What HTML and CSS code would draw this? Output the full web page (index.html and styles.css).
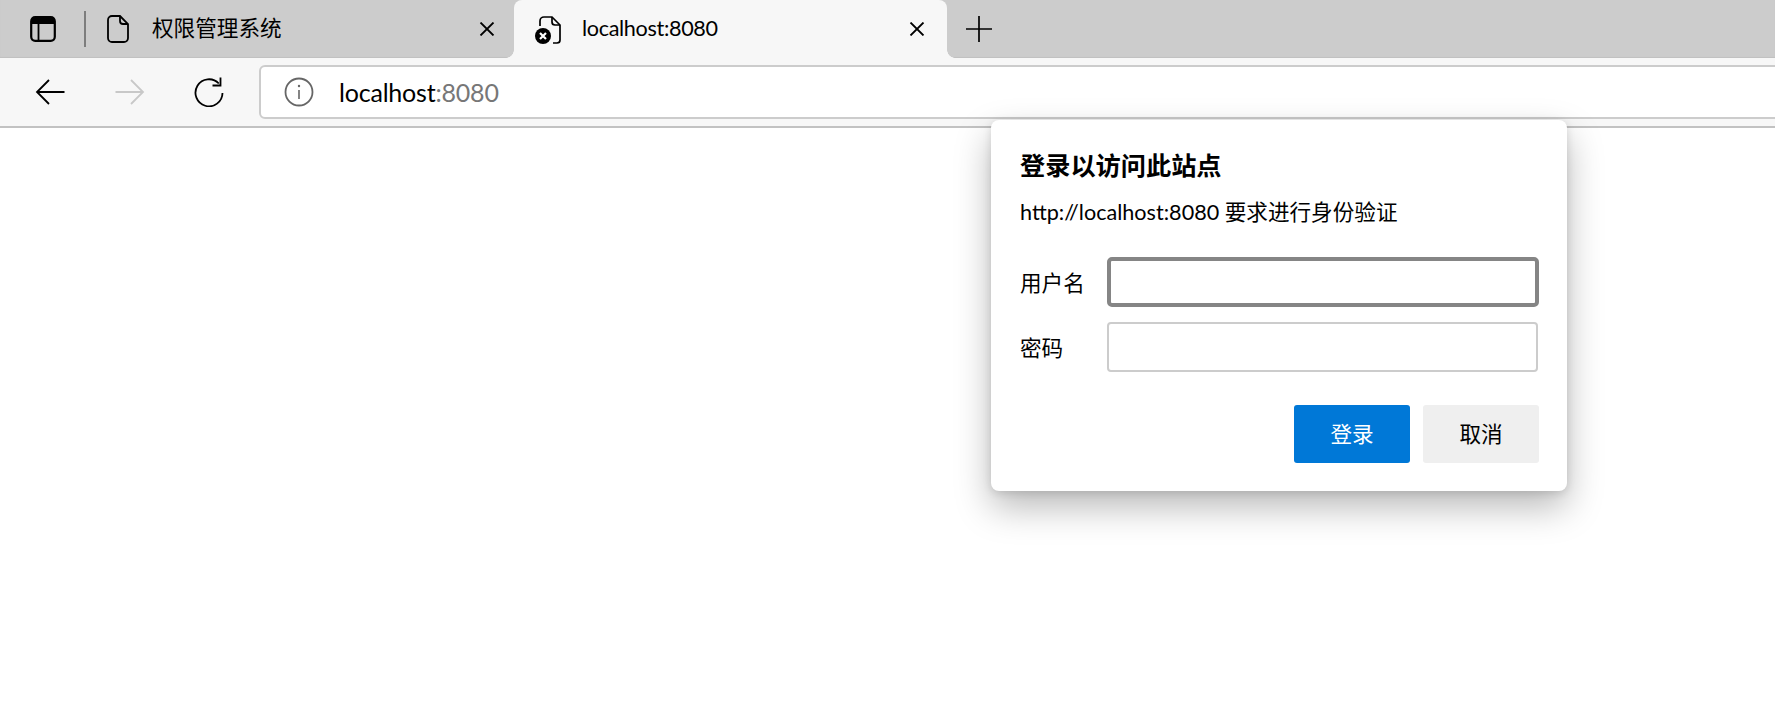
FILE: index.html
```html
<!DOCTYPE html>
<html lang="zh-CN">
<head>
<meta charset="utf-8">
<title>localhost:8080</title>
<link rel="stylesheet" href="styles.css">
</head>
<body>
<div class="strip">
  <div class="strip-lead">
    <svg class="ico-side" viewBox="0 0 26 26"><rect x="1.2" y="1.2" width="23.6" height="23.6" rx="4" fill="none" stroke="#000" stroke-width="2.2"/><path d="M1.2 8V5a4 4 0 0 1 4-4h15.600a4 4 0 0 1 4 4v3z" fill="#000"/><path d="M8.500 8v16" stroke="#000" stroke-width="1.800"/></svg>
    <span class="sep"></span>
  </div>
  <div class="tab tab-idle">
    <svg class="ico-doc" viewBox="0 0 22 28"><path d="M5 1h8l8 8v14a4 4 0 0 1-4 4H5a4 4 0 0 1-4-4V5a4 4 0 0 1 4-4z" fill="none" stroke="#000" stroke-width="1.800"/><path d="M13 1v5a3 3 0 0 0 3 3h5" fill="none" stroke="#000" stroke-width="1.800"/></svg>
    <span class="tab-title">权限管理系统</span>
    <svg class="ico-x" viewBox="0 0 16 14"><path d="M1.500 0.500l13 13M14.500 0.500l-13 13" stroke="#000" stroke-width="1.800" fill="none"/></svg>
  </div>
  <div class="tab tab-active">
    <svg class="ico-err" viewBox="0 0 26 29"><path d="M5 11V6a4 4 0 0 1 4-4h8l8 8v15a3 3 0 0 1-3 3h-4" fill="none" stroke="#000" stroke-width="1.700"/><path d="M17 2v5a3 3 0 0 0 3 3h5" fill="none" stroke="#000" stroke-width="1.700"/><circle cx="8" cy="21" r="8" fill="#000"/><path d="M5 18l6 6M11 18l-6 6" stroke="#fff" stroke-width="2.200"/></svg>
    <span class="tab-title">localhost:8080</span>
    <svg class="ico-x" viewBox="0 0 16 14"><path d="M1.500 0.500l13 13M14.500 0.500l-13 13" stroke="#000" stroke-width="1.800" fill="none"/></svg>
  </div>
  <svg class="ico-plus" viewBox="0 0 26 26"><path d="M13 0v26M0 13h26" stroke="#000" stroke-width="1.700" fill="none"/></svg>
</div>
<div class="toolbar">
  <svg class="nav nav-back" viewBox="0 0 30 26"><path d="M29.500 13H2M14 1L2 13l12 12" fill="none" stroke="#000" stroke-width="1.800"/></svg>
  <svg class="nav nav-fwd" viewBox="0 0 30 26"><path d="M0.500 13H28M16 1l12 12-12 12" fill="none" stroke="#c8c8c8" stroke-width="1.800"/></svg>
  <svg class="nav nav-reload" viewBox="0 0 30 30"><path d="M24.800 6.500A13.500 13.500 0 1 0 28.500 16" fill="none" stroke="#000" stroke-width="1.800"/><path d="M26.500 0.500v8h-8" fill="none" stroke="#000" stroke-width="1.800"/></svg>
  <div class="address">
    <svg class="ico-info" viewBox="0 0 30 30"><circle cx="15" cy="15" r="13.500" fill="none" stroke="#666" stroke-width="1.800"/><path d="M15 13v9" stroke="#666" stroke-width="1.600"/><circle cx="15" cy="9" r="1.200" fill="#666"/></svg>
    <span class="url">localhost<span class="url-port">:8080</span></span>
  </div>
</div>
<main class="page"></main>
<form class="dialog">
  <h1 class="dlg-title">登录以访问此站点</h1>
  <p class="dlg-sub">http://localhost:8080 要求进行身份验证</p>
  <div class="field field-first">
    <label class="field-label" for="u">用户名</label>
    <input class="field-input field-focus" id="u" type="text">
  </div>
  <div class="field field-second">
    <label class="field-label" for="p">密码</label>
    <input class="field-input" id="p" type="password">
  </div>
  <div class="actions">
    <button class="btn btn-primary" type="button">登录</button>
    <button class="btn" type="button">取消</button>
  </div>
</form>
</body>
</html>
```
FILE: styles.css
```css
* { box-sizing: border-box; }
html, body { margin: 0; height: 100%; }
body {
  background: #fff;
  color: #000;
  font-family: "Lato", "Noto Sans CJK SC", sans-serif;
  overflow: hidden;
}
.strip {
  height: 58px;
  background: #ccc;
  display: flex;
  align-items: stretch;
  box-shadow: inset 0 -1px 1px rgba(0,0,0,.06);
}
.strip-lead {
  display: flex;
  align-items: center;
  padding: 0 0 0 30px;
  width: 86px;
  flex: none;
}
.ico-side { width: 26px; height: 26px; margin-right: 28px; flex: none; }
.sep { width: 2px; height: 36px; background: #7d7d7d; flex: none; }
.tab { display: flex; align-items: center; flex: none; }
.tab-title { font-size: 21.6px; line-height: 30px; white-space: nowrap; margin-bottom: 3px; }
.tab-idle {
  width: 428px;
  padding-left: 21px;
}
.tab-idle .tab-title { margin-left: 23px; width: 327px; }
.ico-doc { width: 22px; height: 28px; flex: none; }
.ico-x { width: 16px; height: 14px; flex: none; }
.tab-active {
  position: relative;
  width: 433px;
  background: #f7f7f7;
  border-radius: 8px 8px 0 0;
  padding-left: 21px;
}
.tab-active::before,
.tab-active::after {
  content: "";
  position: absolute;
  bottom: 0;
  width: 8px;
  height: 8px;
}
.tab-active::before {
  left: -8px;
  background: radial-gradient(circle at 0 0, transparent 7.5px, #f7f7f7 8px);
}
.tab-active::after {
  right: -8px;
  background: radial-gradient(circle at 100% 0, transparent 7.5px, #f7f7f7 8px);
}
.tab-active .tab-title { margin-left: 21px; width: 327px; letter-spacing: -0.33px; }
.ico-err { width: 26px; height: 29px; flex: none; }
.ico-plus { width: 26px; height: 26px; margin-left: 19px; align-self: center; flex: none; margin-bottom: 1px; }
.toolbar {
  height: 70px;
  background: #f7f7f7;
  border-bottom: 2px solid #c2c2c2;
  display: flex;
  align-items: center;
  padding: 0 0 0 35px;
  overflow: hidden;
}
.nav { flex: none; }
.nav-back { width: 30px; height: 26px; margin-right: 50px; }
.nav-fwd { width: 30px; height: 26px; margin-right: 49px; }
.nav-reload { width: 30px; height: 30px; margin-right: 35px; }
.address {
  flex: 1;
  height: 54px;
  margin-right: -12px;
  background: #fff;
  border: 2px solid #ccc;
  border-radius: 6px;
  display: flex;
  align-items: center;
  padding-left: 23px;
}
.ico-info { width: 30px; height: 30px; flex: none; margin-right: 25px; }
.url { font-size: 25px; line-height: 34px; color: #000; letter-spacing: -0.2px; }
.url-port { color: #777; }
.page { height: 591px; background: #fff; }
.dialog {
  position: absolute;
  left: 991px;
  top: 120px;
  width: 576px;
  height: 371px;
  background: #fff;
  border-radius: 8px;
  box-shadow: 0 16px 36px rgba(0,0,0,.28), 0 2px 8px rgba(0,0,0,.12);
  padding: 28px 29px 28px 29px;
  margin: 0;
}
.dlg-title { margin: 0; font-size: 25.2px; line-height: 34px; font-weight: 700; }
.dlg-sub { margin: 15px 0 0; font-size: 21.6px; line-height: 30px; }
.field { display: flex; align-items: center; }
.field-first { margin-top: 30px; }
.field-second { margin-top: 15px; }
.field-label { width: 87px; flex: none; font-size: 21.6px; line-height: 30px; margin-top: 2px; }
.field-input {
  width: 431px;
  height: 50px;
  flex: none;
  border: 2px solid #ccc;
  border-radius: 4px;
  background: #fff;
  outline: none;
  padding: 0 8px;
}
.field-focus { border: 4px solid #858585; border-radius: 5px; width: 432px; }
.actions { display: flex; justify-content: flex-end; gap: 13px; margin-top: 33px; margin-right: -1px; }
.btn {
  width: 116px;
  height: 58px;
  border: 0;
  border-radius: 3px;
  background: #efefef;
  color: #000;
  font-family: inherit;
  font-size: 21.6px;
  padding: 0 0 4px;
}
.btn-primary { background: #0078d7; color: #fff; }
```
